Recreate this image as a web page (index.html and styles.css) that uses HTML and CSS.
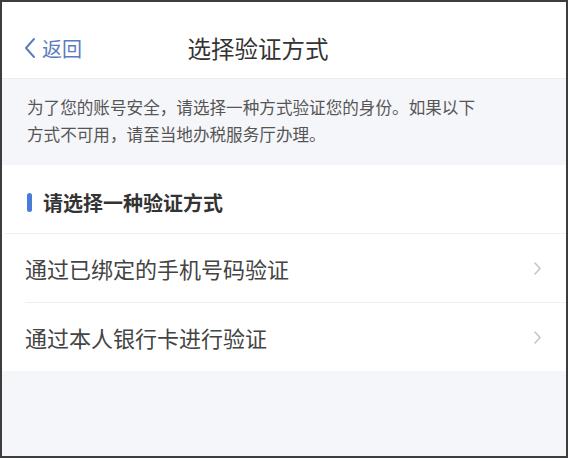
FILE: index.html
```html
<!DOCTYPE html>
<html lang="zh-CN">

<head>
    <meta charset="UTF-8">
    <meta name="viewport" content="width=device-width, initial-scale=1.0">
    <title>选择验证方式</title>
    <link rel="stylesheet" href="styles.css">
</head>

<body>
    <div class="frame">
        <div class="nav-bar">
            <a class="back" href="#">
                <svg class="back-icon" width="14" height="22" viewBox="0 0 14 22">
                    <polyline points="11,2 3,11 11,20" fill="none" stroke="currentColor" stroke-width="2" stroke-linecap="round" stroke-linejoin="round" />
                </svg>
                <span>返回</span>
            </a>
            <div class="nav-title">选择验证方式</div>
        </div>

        <div class="notice">
            为了您的账号安全，请选择一种方式验证您的身份。如果以下方式不可用，请至当地办税服务厅办理。
        </div>

        <div class="method-list">
            <div class="list-header">
                <span class="header-bar"></span>
                <span>请选择一种验证方式</span>
            </div>
            <div class="list-item">
                <span>通过已绑定的手机号码验证</span>
                <svg class="arrow" width="9" height="15" viewBox="0 0 9 15">
                    <polyline points="2,2 7,7.5 2,13" fill="none" stroke="currentColor" stroke-width="1.6" stroke-linecap="round" stroke-linejoin="round" />
                </svg>
            </div>
            <div class="list-item">
                <span>通过本人银行卡进行验证</span>
                <svg class="arrow" width="9" height="15" viewBox="0 0 9 15">
                    <polyline points="2,2 7,7.5 2,13" fill="none" stroke="currentColor" stroke-width="1.6" stroke-linecap="round" stroke-linejoin="round" />
                </svg>
            </div>
        </div>
    </div>
</body>

</html>
```

FILE: styles.css
```css
body {
    margin: 0;
    background: #fff;
    font-family: "Noto Sans CJK SC", "Noto Sans", sans-serif;
}

.frame {
    width: 564px;
    height: 454px;
    border: 2px solid #3d3d3d;
    background: #f5f6fa;
    overflow: hidden;
}

.nav-bar {
    position: relative;
    height: 60px;
    padding-top: 16px;
    padding-right: 52px;
    display: flex;
    align-items: center;
    justify-content: center;
    background: #fff;
    border-bottom: 1px solid #ececec;
}

.back {
    position: absolute;
    left: 21px;
    top: 16px;
    height: 60px;
    display: flex;
    align-items: center;
    gap: 5px;
    color: #5b7dbd;
    font-size: 20px;
    text-decoration: none;
}

.nav-title {
    font-size: 23.5px;
    color: #333;
}

.notice {
    padding: 15px 80px 17px 25px;
    font-size: 16.6px;
    line-height: 27px;
    color: #555;
}

.method-list {
    background: #fff;
}

.list-header {
    height: 69px;
    padding-top: 7px;
    box-sizing: border-box;
    display: flex;
    align-items: center;
    margin-left: 3px;
    padding-left: 22px;
    font-size: 20px;
    font-weight: bold;
    color: #333;
    border-bottom: 1px solid #f0f0f0;
}

.header-bar {
    width: 5px;
    height: 19px;
    margin-right: 11px;
    border-radius: 3px;
    background: #4a7bd9;
}

.list-item {
    height: 68px;
    margin-left: 23px;
    padding-right: 24px;
    display: flex;
    align-items: center;
    justify-content: space-between;
    font-size: 22px;
    color: #444;
    border-bottom: 1px solid #f0f0f0;
}

.list-item:last-child {
    border-bottom: none;
}

.arrow {
    color: #c6c6c6;
}
```
